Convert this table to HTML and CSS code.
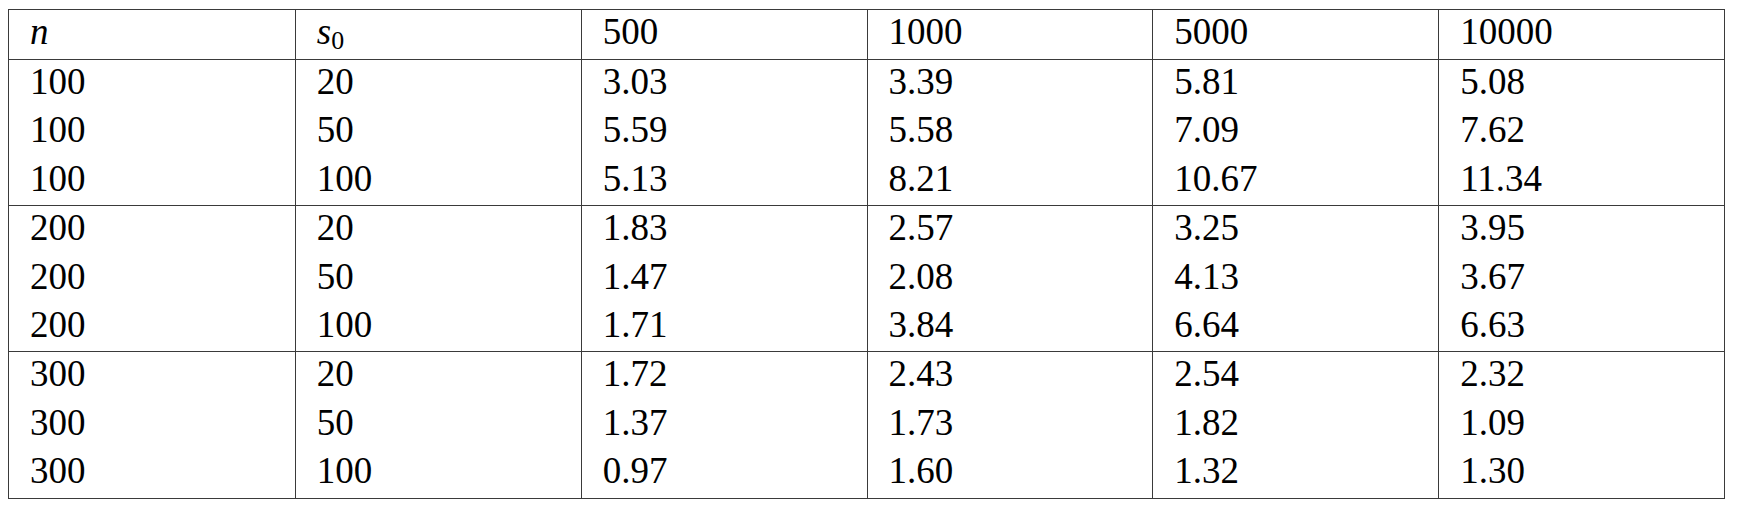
FILE: index.html
```html
<!DOCTYPE html>
<html>
<head>
  <meta charset='utf-8'>
  <title>Results</title>
  <meta name='viewport' content='width=device-width, initial-scale=1'>
  <link rel="stylesheet" href="styles.css">
</head>
<body>

  <div class="results">
    <div class="head">
      <div class="row">
        <div class="cell"><i>n</i></div>
        <div class="cell"><i>s</i><sub>0</sub></div>
        <div class="cell">500</div>
        <div class="cell">1000</div>
        <div class="cell">5000</div>
        <div class="cell">10000</div>
      </div>
    </div>
    <div class="group">
      <div class="row"><div class="cell">100</div><div class="cell">20</div><div class="cell">3.03</div><div class="cell">3.39</div><div class="cell">5.81</div><div class="cell">5.08</div></div>
      <div class="row"><div class="cell">100</div><div class="cell">50</div><div class="cell">5.59</div><div class="cell">5.58</div><div class="cell">7.09</div><div class="cell">7.62</div></div>
      <div class="row"><div class="cell">100</div><div class="cell">100</div><div class="cell">5.13</div><div class="cell">8.21</div><div class="cell">10.67</div><div class="cell">11.34</div></div>
    </div>
    <div class="group">
      <div class="row"><div class="cell">200</div><div class="cell">20</div><div class="cell">1.83</div><div class="cell">2.57</div><div class="cell">3.25</div><div class="cell">3.95</div></div>
      <div class="row"><div class="cell">200</div><div class="cell">50</div><div class="cell">1.47</div><div class="cell">2.08</div><div class="cell">4.13</div><div class="cell">3.67</div></div>
      <div class="row"><div class="cell">200</div><div class="cell">100</div><div class="cell">1.71</div><div class="cell">3.84</div><div class="cell">6.64</div><div class="cell">6.63</div></div>
    </div>
    <div class="group">
      <div class="row"><div class="cell">300</div><div class="cell">20</div><div class="cell">1.72</div><div class="cell">2.43</div><div class="cell">2.54</div><div class="cell">2.32</div></div>
      <div class="row"><div class="cell">300</div><div class="cell">50</div><div class="cell">1.37</div><div class="cell">1.73</div><div class="cell">1.82</div><div class="cell">1.09</div></div>
      <div class="row"><div class="cell">300</div><div class="cell">100</div><div class="cell">0.97</div><div class="cell">1.60</div><div class="cell">1.32</div><div class="cell">1.30</div></div>
    </div>
  </div>

</body>
</html>
```

FILE: styles.css
```css
body {
  margin: 9px 8px;
  background: #fff;
  color: #000;
}

.results {
  width: 1717px;
  box-sizing: border-box;
  border: 1px solid #3a3a3a;
  font-family: "Liberation Serif", "DejaVu Serif", serif;
  font-size: 37px;
}

.head {
  border-bottom: 1px solid #3a3a3a;
}

.group + .group {
  border-top: 1px solid #3a3a3a;
}

.row {
  display: grid;
  grid-template-columns: repeat(6, 1fr);
  height: 48.4px;
}

.head .row {
  height: 49px;
}

.cell {
  padding: 0 20px 0 21px;
  border-left: 1px solid #3a3a3a;
  overflow: hidden;
}

.cell:first-child {
  border-left: none;
}

.cell i {
  font-style: italic;
}

.cell sub {
  font-size: 0.7em;
  line-height: 0;
  vertical-align: -0.2em;
}
```
